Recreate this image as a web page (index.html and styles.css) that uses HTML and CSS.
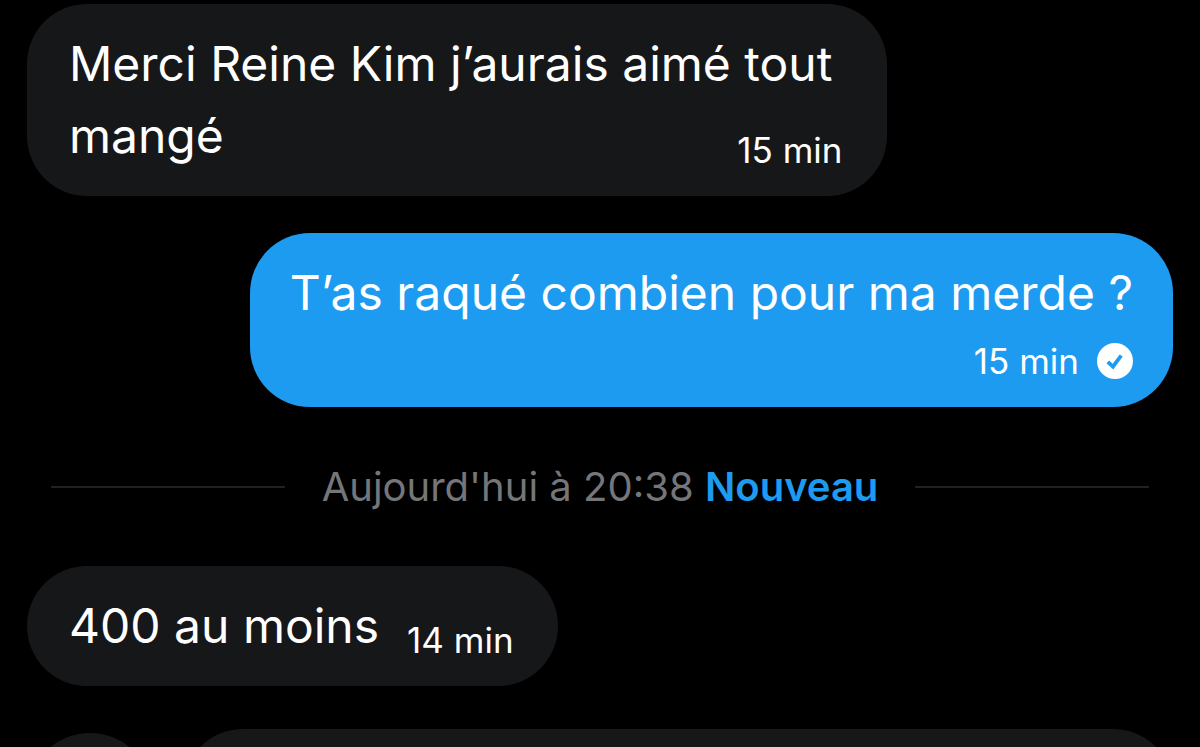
FILE: index.html
```html
<!DOCTYPE html>
<html lang="fr">
<head>
  <meta charset="UTF-8">
  <title>Messages</title>
  <link rel="stylesheet" href="styles.css">
</head>
<body>
  <main class="chat">
    <div class="bubble received long">
      <p>Merci Reine Kim j’aurais aimé tout mangé <time>15 min</time></p>
    </div>

    <div class="bubble sent">
      <p>T’as raqué combien pour ma merde ?</p>
      <div class="meta">
        <time>15 min</time>
        <svg class="check" viewBox="0 0 36 36" role="img" aria-label="Envoyé">
          <circle cx="18" cy="18" r="18" fill="#fff"/>
          <path d="M10.8 18.8l5.2 4.9 8.2-11.2" fill="none" stroke="#1d9bf0" stroke-width="3.8"/>
        </svg>
      </div>
    </div>

    <div class="separator">
      <span class="date">Aujourd'hui à 20:38 <strong>Nouveau</strong></span>
    </div>

    <div class="bubble received short">
      <p>400 au moins</p>
      <time>14 min</time>
    </div>

    <div class="next">
      <div class="avatar"></div>
      <div class="bubble received empty"></div>
    </div>
  </main>
</body>
</html>
```
FILE: styles.css
```css
:root {
  --received: #161719;
  --sent: #1d9bf0;
  --muted: #75767a;
  --line: #202122;
}

* {
  box-sizing: border-box;
}

body {
  margin: 0;
  background: #000;
  color: #fff;
  font-family: Inter, "Liberation Sans", sans-serif;
}

.chat {
  display: flex;
  flex-direction: column;
  padding: 4px 27px 0;
  height: 100vh;
  overflow: hidden;
}

.bubble {
  flex: none;
  border-radius: 60px;
  padding: 24px 42px;
}

.bubble p {
  margin: 0;
  font-size: 48px;
  line-height: 72px;
}

time {
  font-size: 35px;
  line-height: 44px;
  white-space: nowrap;
}

.received {
  align-self: flex-start;
  padding-right: 44px;
  background: var(--received);
}

.long {
  width: 75%;
}

/* the time shares the last line of the text */
.long time {
  float: right;
  margin-top: 28px;
}

.sent {
  align-self: flex-end;
  margin-top: 37px;
  padding: 24px 40px;
  background: var(--sent);
}

.meta {
  display: flex;
  justify-content: flex-end;
  align-items: center;
  gap: 18px;
  margin-top: 10px;
}

.check {
  width: 36px;
  height: 36px;
}

.separator {
  display: flex;
  align-items: center;
  gap: 37px;
  margin: 52px 24px 51px;
  font-size: 40px;
  line-height: 56px;
  color: var(--muted);
  white-space: nowrap;
}

.separator::before,
.separator::after {
  content: "";
  flex: 1;
  height: 2px;
  background: var(--line);
}

.separator strong {
  color: var(--sent);
  font-weight: 600;
}

.short {
  display: flex;
  align-items: flex-end;
  gap: 28px;
}

.next {
  display: flex;
  gap: 30px;
  margin-top: 43px;
}

.avatar {
  width: 126px;
  height: 126px;
  margin-top: 4px;
  border-radius: 50%;
  background: var(--received);
}

.empty {
  flex: 1;
  height: 160px;
}
```
